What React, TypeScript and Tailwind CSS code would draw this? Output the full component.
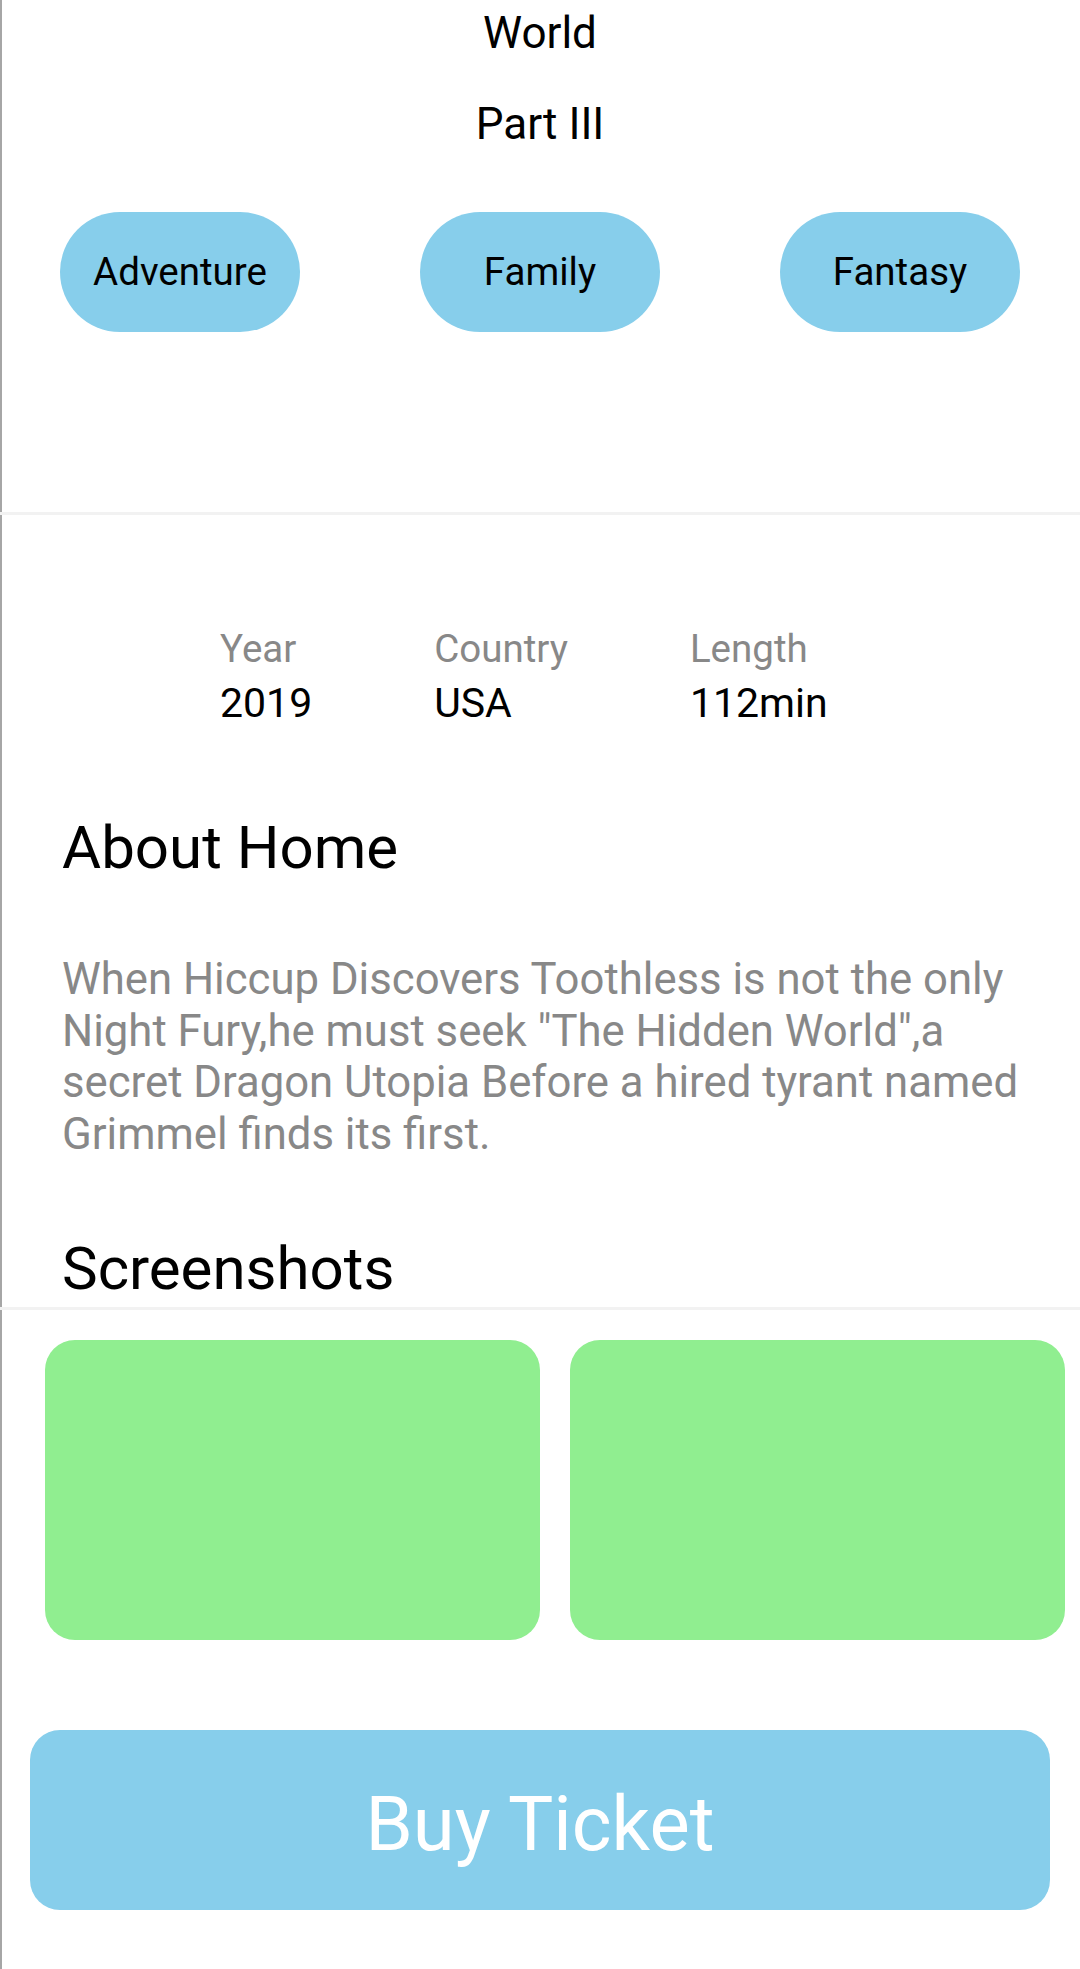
const genres = ['Adventure', 'Family', 'Fantasy'];

const stats = [
  { label: 'Year', value: '2019' },
  { label: 'Country', value: 'USA' },
  { label: 'Length', value: '112min' },
];

export default function App() {
  return (
    <div className="min-h-screen w-full overflow-hidden bg-white text-black shadow-[inset_2px_0_0_#a6a6a6] font-['Roboto','Liberation_Sans',sans-serif]">
      {/* Title */}
      <div className="pt-[7px] text-center text-[44px] leading-[52px]">World</div>
      <div className="mt-[39px] text-center text-[44px] leading-[52px]">Part III</div>

      {/* Genres */}
      <div className="mt-[62px] flex justify-around">
        {genres.map((g) => (
          <div
            key={g}
            className="flex h-[120px] w-[240px] items-center justify-center rounded-full bg-[#87ceeb] text-[38.5px]"
          >
            {g}
          </div>
        ))}
      </div>

      <div className="mt-[180px] h-[3px] bg-[#f2f2f2]" />

      {/* Info */}
      <div className="mt-[111px] flex gap-[122px] pl-[220px]">
        {stats.map((s) => (
          <div key={s.label}>
            <div className="text-[38.5px] leading-[45px] text-[#888888]">{s.label}</div>
            <div className="mt-[8px] text-[41px] leading-[48px]">{s.value}</div>
          </div>
        ))}
      </div>

      {/* About */}
      <div className="mt-[85px] pl-[62px] text-[60px] leading-[72px]">About Home</div>
      <p className="mt-[70px] pl-[62px] pr-[24px] text-[43.7px] leading-[51.7px] text-[#888888]">
        When Hiccup Discovers Toothless is not the only Night Fury,he must seek "The Hidden World",a secret
        Dragon Utopia Before a hired tyrant named Grimmel finds its first.
      </p>

      {/* Screenshots */}
      <div className="mt-[72px] pl-[62px] text-[60px] leading-[72px]">Screenshots</div>
      <div className="mt-[2px] h-[3px] bg-[#f2f2f2]" />
      <div className="mt-[30px] flex gap-[30px] pl-[45px]">
        <div className="h-[300px] w-[495px] shrink-0 rounded-[30px] bg-[#90ee90]" />
        <div className="h-[300px] w-[495px] shrink-0 rounded-[30px] bg-[#90ee90]" />
      </div>

      {/* Button */}
      <div className="mx-[30px] mt-[90px] flex h-[180px] items-center justify-center rounded-[30px] bg-[#87ceeb] pt-[8px] text-[76px] text-white">
        Buy Ticket
      </div>
    </div>
  );
}
